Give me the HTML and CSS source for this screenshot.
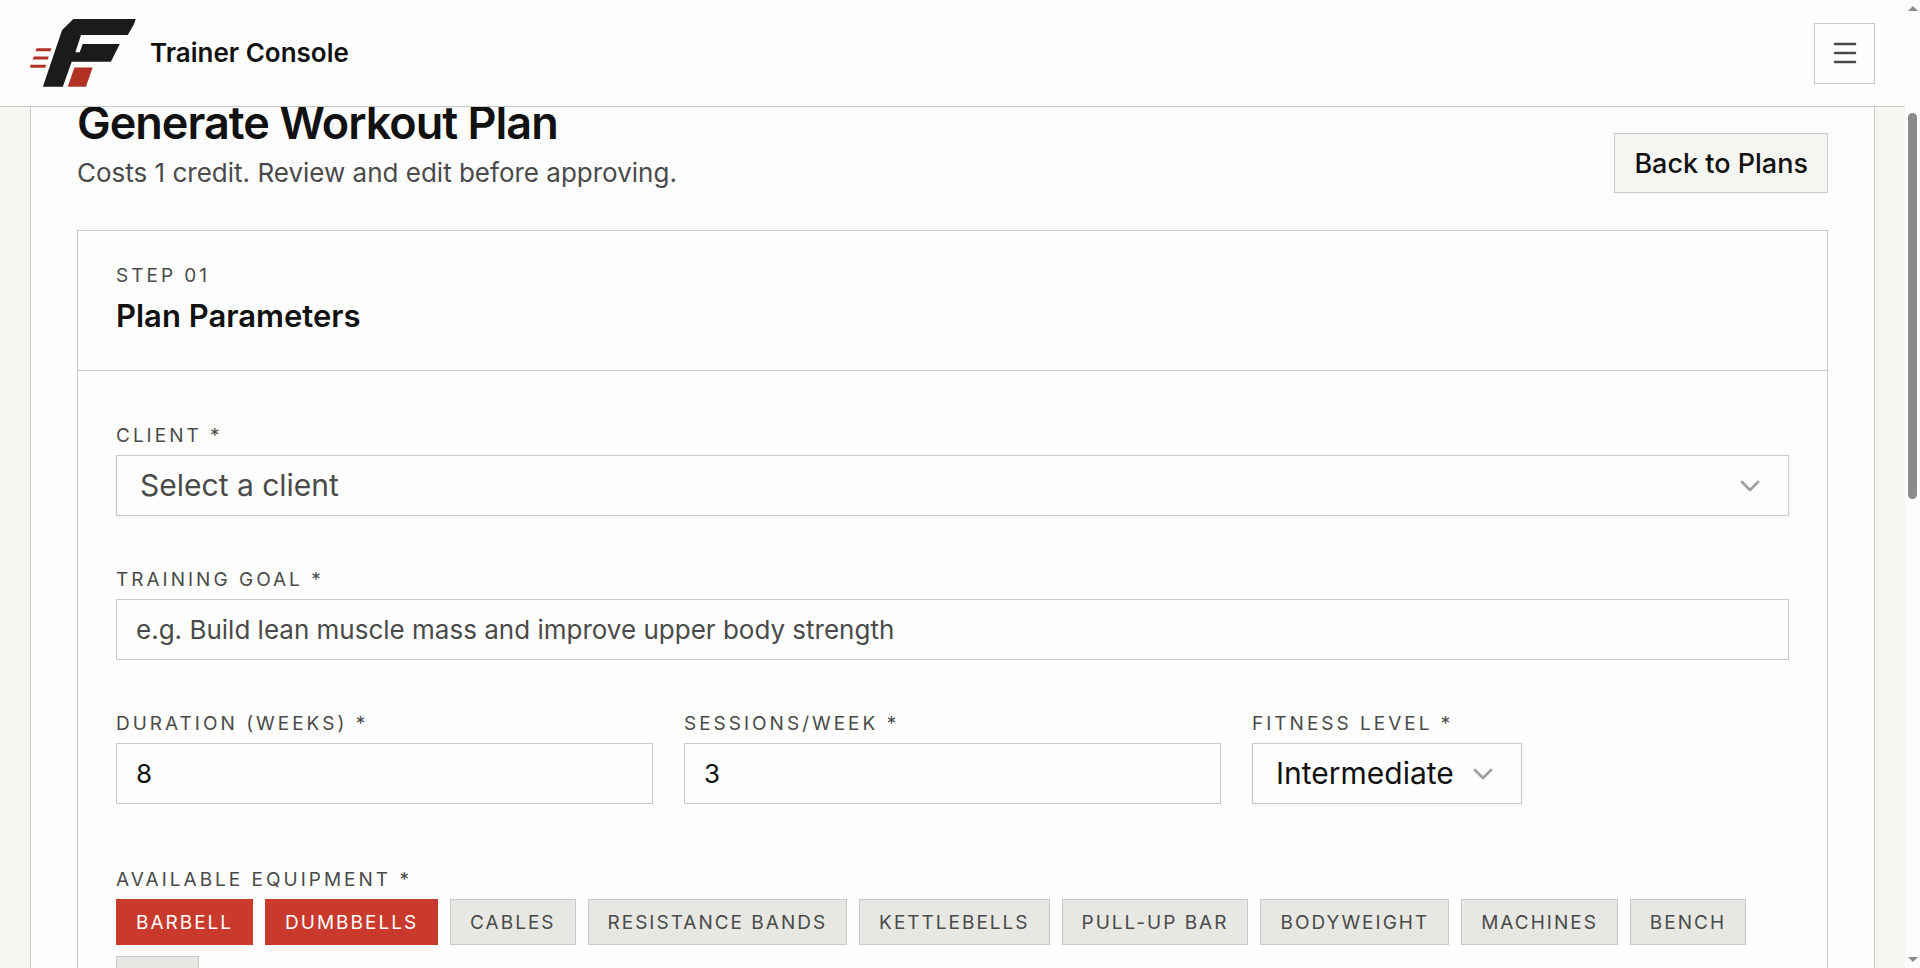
FILE: index.html
```html
<!DOCTYPE html>
<html lang="en">
<head>
    <meta charset="utf-8">
    <meta name="viewport" content="width=device-width, initial-scale=1">
    <title>Generate Workout Plan</title>
    <link rel="stylesheet" href="styles.css">
</head>
<body>
    <div class="app">
        <header class="topbar">
            <div class="brand">
                <svg class="brand-logo" viewBox="90 57 318 205" aria-hidden="true">
                    <path fill="#191c1b" d="M220 57H408L403 72 384 105H243L226 157H239L248 132H360L333 186H215L188 261H128L186 90Z"/>
                    <path fill="#b13224" d="M223 203H278L258 261H203ZM109 145H154L151 154H106ZM101 170H146L143 179H97ZM90 195H138L135 204H90Z"/>
                </svg>
                <span class="brand-name">Trainer Console</span>
            </div>
            <button class="menu-button" type="button" aria-label="Open menu">
                <svg viewBox="0 0 24 22" aria-hidden="true">
                    <path d="M2 2H22M2 11H22M2 20H22"/>
                </svg>
            </button>
        </header>

        <main class="content">
            <div class="panel">
                <div class="page-head">
                    <div>
                        <h1>Generate Workout Plan</h1>
                        <p class="subtitle">Costs 1 credit. Review and edit before approving.</p>
                    </div>
                    <a class="back-link" href="#">Back to Plans</a>
                </div>

                <section class="card">
                    <div class="card-head">
                        <p class="eyebrow">Step 01</p>
                        <h2>Plan Parameters</h2>
                    </div>
                    <form class="card-body">
                        <div class="field">
                            <label for="client">Client *</label>
                            <div class="select-wrap">
                                <select id="client" class="placeholder">
                                    <option>Select a client</option>
                                </select>
                                <svg class="chevron" viewBox="0 0 20 12" aria-hidden="true"><path d="M2 2L10 10L18 2"/></svg>
                            </div>
                        </div>

                        <div class="field">
                            <label for="goal">Training Goal *</label>
                            <input type="text" id="goal" placeholder="e.g. Build lean muscle mass and improve upper body strength">
                        </div>

                        <div class="field-row">
                            <div class="field">
                                <label for="weeks">Duration (weeks) *</label>
                                <input type="number" id="weeks" value="8">
                            </div>
                            <div class="field">
                                <label for="sessions">Sessions/week *</label>
                                <input type="number" id="sessions" value="3">
                            </div>
                            <div class="field">
                                <label for="level">Fitness Level *</label>
                                <div class="select-wrap compact">
                                    <select id="level">
                                        <option>Beginner</option>
                                        <option selected>Intermediate</option>
                                        <option>Advanced</option>
                                    </select>
                                    <svg class="chevron" viewBox="0 0 20 12" aria-hidden="true"><path d="M2 2L10 10L18 2"/></svg>
                                </div>
                            </div>
                        </div>

                        <div class="field" role="group" aria-labelledby="equipment-label">
                            <span class="label" id="equipment-label">Available Equipment *</span>
                            <div class="chips">
                                <button type="button" class="chip active">Barbell</button>
                                <button type="button" class="chip active">Dumbbells</button>
                                <button type="button" class="chip">Cables</button>
                                <button type="button" class="chip">Resistance Bands</button>
                                <button type="button" class="chip">Kettlebells</button>
                                <button type="button" class="chip">Pull-up Bar</button>
                                <button type="button" class="chip">Bodyweight</button>
                                <button type="button" class="chip">Machines</button>
                                <button type="button" class="chip">Bench</button>
                                <button type="button" class="chip">TRX</button>
                            </div>
                        </div>
                    </form>
                </section>
            </div>
        </main>
    </div>

    <div class="scrollbar" aria-hidden="true">
        <span class="arrow up"></span>
        <span class="thumb"></span>
        <span class="arrow down"></span>
    </div>
</body>
</html>
```

FILE: styles.css
```css
* {
    box-sizing: border-box;
}

body {
    display: flex;
    height: 100vh;
    margin: 0;
    overflow: hidden;
    background-color: #f5f6f1;
    color: #111;
    font-family: Inter, "Liberation Sans", sans-serif;
}

h1, h2, p {
    margin: 0;
}

button, input, select {
    font-family: inherit;
}

.app {
    display: flex;
    flex-direction: column;
    flex: 1;
    min-width: 0;
    overflow: hidden;
}

/* Top bar */
.topbar {
    position: relative;
    z-index: 1;
    display: flex;
    align-items: center;
    justify-content: space-between;
    flex: none;
    height: 107px;
    padding: 0 30px;
    background-color: #fefefe;
    border-bottom: 1px solid #c9c9c9;
}

.brand {
    display: flex;
    align-items: center;
    gap: 14px;
}

.brand-logo {
    width: 106px;
    height: 68px;
}

.brand-name {
    font-size: 26px;
    font-weight: 600;
    line-height: 32px;
}

.menu-button {
    display: flex;
    align-items: center;
    justify-content: center;
    width: 61px;
    height: 61px;
    padding: 0;
    background-color: #fefefe;
    border: 1px solid #c9c9c9;
}

.menu-button svg {
    width: 24px;
    height: 22px;
    stroke: #4a4a4a;
    stroke-width: 2.6;
    stroke-linecap: round;
}

/* Page */
.content {
    flex: 1;
    min-height: 0;
    padding: 0 30px;
}

/* the page sits part-scrolled under the top bar */
.panel {
    margin-top: -56px;
    padding: 46px;
    background-color: #fdfdfd;
    border: 1px solid #c9c9c9;
}

.page-head {
    display: flex;
    align-items: flex-end;
    justify-content: space-between;
    margin-bottom: 37px;
}

h1 {
    font-size: 45px;
    font-weight: 600;
    line-height: 50px;
    letter-spacing: -1px;
}

.subtitle {
    margin-top: 5px;
    color: #4a4a4a;
    font-size: 26px;
    line-height: 40px;
}

.back-link {
    display: flex;
    align-items: center;
    height: 60px;
    padding: 0 19px;
    background-color: #f5f6f1;
    border: 1px solid #c9c9c9;
    color: #111;
    font-size: 27px;
    font-weight: 500;
    text-decoration: none;
}

/* Card */
.card {
    background-color: #fefefe;
    border: 1px solid #c9c9c9;
}

.card-head {
    padding: 33px 38px 34px;
    border-bottom: 1px solid #c9c9c9;
}

.eyebrow, label, .label {
    color: #4a4a4a;
    font-size: 19px;
    line-height: 24px;
    letter-spacing: 3px;
    text-transform: uppercase;
}

h2 {
    margin-top: 8px;
    font-size: 31px;
    font-weight: 600;
    line-height: 40px;
}

.card-body {
    display: flex;
    flex-direction: column;
    gap: 52px;
    padding: 53px 38px;
}

.field {
    display: flex;
    flex-direction: column;
    gap: 7px;
}

.field-row {
    display: grid;
    grid-template-columns: repeat(3, 1fr);
    gap: 31px;
    margin-bottom: 12px;
}

input, select {
    width: 100%;
    height: 61px;
    background-color: #fefefe;
    border: 1px solid #c9c9c9;
    border-radius: 0;
    color: #111;
}

input {
    padding: 0 19px;
    font-size: 26px;
}

input::placeholder {
    color: #4a4a4a;
    opacity: 1;
}

input[type="number"] {
    appearance: textfield;
}

.select-wrap {
    position: relative;
}

.select-wrap.compact {
    width: 270px;
}

select {
    display: block;
    padding: 0 60px 2px 23px;
    appearance: none;
    font-size: 30px;
    box-shadow: 0 2px 4px rgba(0, 0, 0, 0.06);
}

.compact select {
    padding-right: 50px;
}

select.placeholder {
    color: #4a4a4a;
}

.chevron {
    position: absolute;
    top: 50%;
    right: 29px;
    width: 20px;
    height: 12px;
    margin-top: -6px;
    fill: none;
    stroke: #a0a0a0;
    stroke-width: 2.8;
    stroke-linecap: round;
    stroke-linejoin: round;
    pointer-events: none;
}

/* Equipment toggles */
.chips {
    display: flex;
    flex-wrap: wrap;
    gap: 11px 12px;
}

.chip {
    height: 46px;
    padding: 0 19px;
    background-color: #e7e8e3;
    border: 1px solid #c9c9c9;
    color: #4a4a4a;
    font-size: 19px;
    letter-spacing: 2px;
    text-transform: uppercase;
}

.chip.active {
    background-color: #c93a2d;
    border-color: #c93a2d;
    color: #fefefe;
}

/* Scrollbar */
.scrollbar {
    display: flex;
    flex-direction: column;
    align-items: center;
    width: 15px;
    padding: 6px 0;
    background-color: #fcfcfc;
}

.arrow {
    border: 5px solid transparent;
}

.arrow.up {
    border-top: 0;
    border-bottom-color: #8b8b8b;
}

.arrow.down {
    margin-top: auto;
    border-bottom: 0;
    border-top-color: #8b8b8b;
}

.thumb {
    width: 9px;
    height: 386px;
    margin-top: 102px;
    border-radius: 5px;
    background-color: #8b8b8b;
}
```
